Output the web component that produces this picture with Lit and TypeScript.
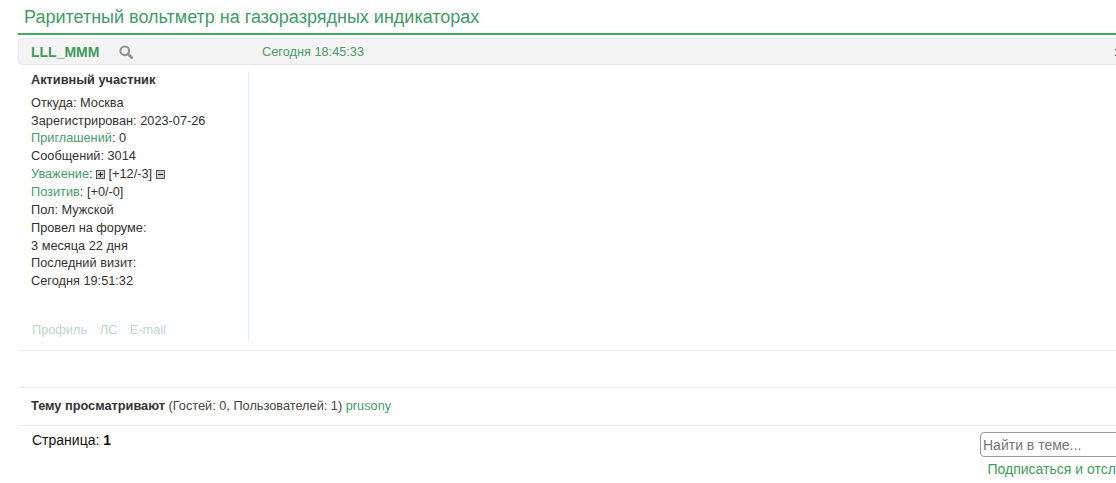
import { LitElement, html, css } from "lit";
import { customElement } from "lit/decorators.js";

@customElement("app-root")
export class AppRoot extends LitElement {
  static styles = css`
    :host { display: block; width: 1116px; height: 483px; overflow: hidden; background: #fff; font-family: "Liberation Sans", Arial, sans-serif; font-size: 12.75px; color: #333; }
    .page { width: 1300px; margin-left: 18px; }
    a { color: #4a9a6a; text-decoration: none; }
    .title { height: 33px; box-sizing: border-box; padding: 6px 0 0 6px; font-size: 18px; line-height: 22px; color: #429a6a; }
    .rule { height: 2px; background: #3fab63; margin-bottom: 3px; }
    .head { display: flex; align-items: center; height: 27px; box-sizing: border-box; background: #f4f4f4; border: 1px solid #e6e6e6; border-radius: 4px 0 0 4px; padding-left: 12px; }
    .nick { width: 88px; font-weight: bold; font-size: 14px; color: #429a5e; }
    .search { width: 143px; display: flex; }
    .date { width: 852px; color: #4a9a6a; }
    .colon { color: #333; }
    .post { display: flex; height: 286px; padding-top: 6px; box-sizing: border-box; border-bottom: 1px solid #e4f3ea; }
    .side { width: 231px; height: 271px; box-sizing: border-box; padding-left: 13px; border-right: 1px solid #e4f3ea; display: flex; flex-direction: column; line-height: 17.85px; }
    .rank { font-weight: bold; margin-bottom: 4.94px; }
    .side .row { display: flex; align-items: center; white-space: pre; }
    .box { width: 9px; height: 9px; box-sizing: border-box; margin: 0 3.5px; border: 1px solid #555; background: #c8d0d6; display: inline-flex; }
    .box svg { display: block; }
    .links { display: flex; gap: 12.6px; margin-top: auto; margin-bottom: 3px; padding-left: 1px; color: #bcd7c6; }
    .viewers { margin-top: 36px; height: 39px; box-sizing: border-box; border-top: 1px solid #eaeaea; border-bottom: 1px solid #eaeaea; padding: 9px 0 0 13px; line-height: 18px; color: #444; }
    .viewers b { color: #333; }
    .foot { display: flex; }
    .pages { width: 962px; padding: 6px 0 0 14px; box-sizing: border-box; font-size: 14px; color: #111; line-height: 16px; }
    .tools { display: flex; flex-direction: column; }
    input { width: 200px; height: 25px; box-sizing: border-box; margin-top: 6px; border: 1px solid #999; border-radius: 4px; padding: 0 2px; font: 14px "Liberation Sans", Arial, sans-serif; outline: none; }
    input::placeholder { color: #757575; opacity: 1; }
    .sub { margin: 4px 0 0 7.5px; font-size: 14px; line-height: 16px; color: #429a5e; white-space: nowrap; }
  `;

  render() {
    return html`<div class="page">
      <div class="title">Раритетный вольтметр на газоразрядных индикаторах</div>
      <div class="rule"></div>
      <div class="head">
        <div class="nick">LLL_MMM</div>
        <div class="search">
          <svg width="14" height="14" viewBox="0 0 14 14" fill="none" stroke="#949494">
            <circle cx="5.8" cy="5.8" r="4.3" stroke-width="2.2"/>
            <path d="M9 9l3.6 3.6" stroke-width="2.8" stroke-linecap="round"/>
          </svg>
        </div>
        <div class="date">Сегодня 18:45:33</div>
        <div class="colon">:</div>
      </div>
      <div class="post">
        <div class="side">
          <div class="rank">Активный участник</div>
          <div class="row">Откуда: Москва</div>
          <div class="row">Зарегистрирован: 2023-07-26</div>
          <div class="row"><a>Приглашений</a>: 0</div>
          <div class="row">Сообщений: 3014</div>
          <div class="row"><a>Уважение</a>:<span class="box"><svg width="7" height="7" viewBox="0 0 7 7"><path d="M1 3.5h5M3.5 1v5" stroke="#222"/></svg></span>[+12/-3]<span class="box"><svg width="7" height="7" viewBox="0 0 7 7"><path d="M1 3.5h5" stroke="#222"/></svg></span></div>
          <div class="row"><a>Позитив</a>: [+0/-0]</div>
          <div class="row">Пол: Мужской</div>
          <div class="row">Провел на форуме:</div>
          <div class="row">3 месяца 22 дня</div>
          <div class="row">Последний визит:</div>
          <div class="row">Сегодня 19:51:32</div>
          <div class="links"><span>Профиль</span><span>ЛС</span><span>E-mail</span></div>
        </div>
      </div>
      <div class="viewers"><b>Тему просматривают</b> (Гостей: 0, Пользователей: 1) <a>prusony</a></div>
      <div class="foot">
        <div class="pages">Страница: <b>1</b></div>
        <div class="tools">
          <input placeholder="Найти в теме..." />
          <div class="sub">Подписаться и отслеживать</div>
        </div>
      </div>
    </div>`;
  }
}
